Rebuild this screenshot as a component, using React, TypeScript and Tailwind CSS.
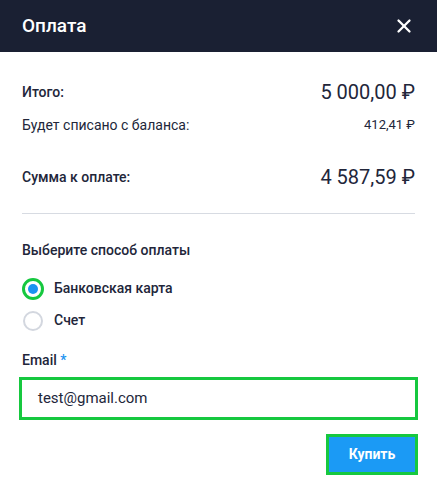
import { X } from 'lucide-react';

export default function App() {
  return (
    <div className="w-[437px] h-[495px] bg-white text-[#22263a]" style={{ fontFamily: 'Roboto, "Noto Sans", sans-serif' }}>
      <div className="h-[52px] bg-[#1a2033] flex items-center justify-between pl-[22px] pr-[22px]">
        <h2 className="text-[19px] font-medium text-white">Оплата</h2>
        <button className="text-white">
          <X className="w-[22px] h-[22px]" strokeWidth={2.5} />
        </button>
      </div>

      <div className="px-[22px] pt-[27px]">
        <div className="flex items-center justify-between h-[26px]">
          <span className="text-[14px] font-medium">Итого:</span>
          <span className="text-[20px]">5 000,00 ₽</span>
        </div>
        <div className="flex items-center justify-between mt-[10px] h-[20px]">
          <span className="text-[14px]">Будет списано с баланса:</span>
          <span className="text-[13px]">412,41 ₽</span>
        </div>
        <div className="flex items-center justify-between mt-[29px] h-[26px]">
          <span className="text-[14px] font-medium">Сумма к оплате:</span>
          <span className="text-[20px]">4 587,59 ₽</span>
        </div>

        <div className="border-t border-[#d7dbe2] mt-[23px]" />

        <div className="mt-[26px] text-[14px] font-medium">Выберите способ оплаты</div>

        <div className="mt-[17px] flex flex-col gap-[11px]">
          <label className="flex items-center gap-[10px] h-[21px]">
            <span className="w-[22px] h-[22px] rounded-full border-[3px] border-[#16c83f] flex items-center justify-center">
              <span className="w-[10px] h-[10px] rounded-full bg-[#1b93f0]" />
            </span>
            <span className="text-[14px] font-medium">Банковская карта</span>
          </label>
          <label className="flex items-center gap-[10px] h-[21px]">
            <span className="w-[22px] h-[22px] flex items-center justify-center">
              <span className="w-[20px] h-[20px] rounded-full border-2 border-[#d3d7df]" />
            </span>
            <span className="text-[14px] font-medium">Счет</span>
          </label>
        </div>

        <div className="mt-[19px] text-[14px] font-medium">
          Email <span className="text-[#1b93f0]">*</span>
        </div>

        <div className="mt-[6px] -mx-[3px] h-[43px] border-[3px] border-[#16c83f] flex items-center pl-[16px]">
          <span className="text-[15px]">test@gmail.com</span>
        </div>

        <div className="flex justify-end mt-[14px] -mr-[3px]">
          <button className="w-[92px] h-[41px] border-[3px] border-[#16c83f] bg-[#1b9af5] text-white text-[14px] font-bold">
            Купить
          </button>
        </div>
      </div>
    </div>
  );
}
